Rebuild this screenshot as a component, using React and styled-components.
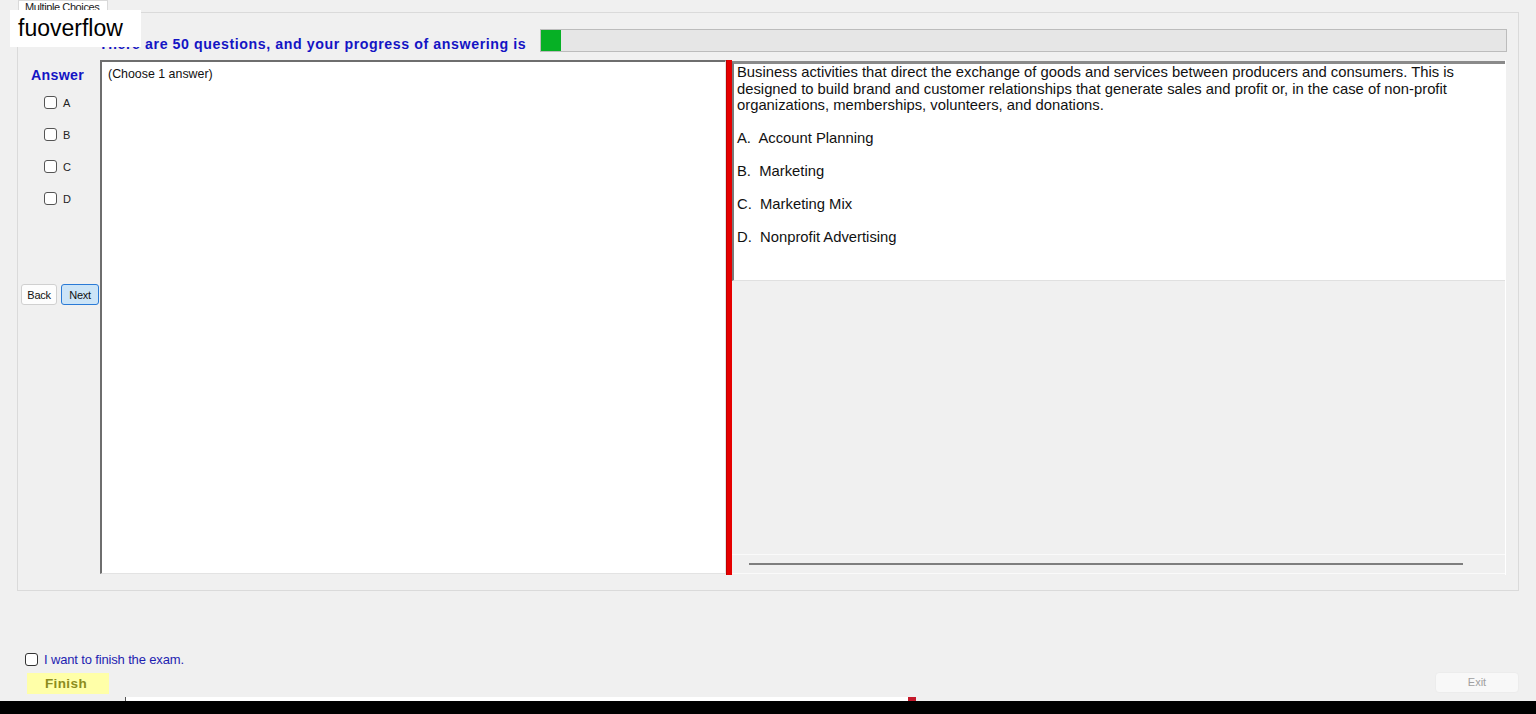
import styled, { createGlobalStyle } from "styled-components";

const GlobalStyle = createGlobalStyle`
  html, body {
    margin: 0;
    padding: 0;
    background: #f0f0f0;
    font-family: "Liberation Sans", Arial, sans-serif;
  }
`;

const Page = styled.div`
  position: relative;
  width: 1536px;
  height: 714px;
  overflow: hidden;
  display: flex;
  flex-direction: column;
  background: #f0f0f0;
`;

const Watermark = styled.div`
  position: absolute;
  left: 10px;
  top: 10px;
  width: 131px;
  height: 37px;
  background: #ffffff;
  color: #000;
  font-size: 23px;
  line-height: 37px;
  padding-left: 8px;
  box-sizing: border-box;
  z-index: 5;
`;

const TabStrip = styled.div`
  height: 12px;
  display: flex;
  padding-left: 18px;
`;

const Tab = styled.div`
  width: 90px;
  height: 13px;
  background: #ffffff;
  border: 1px solid #d9d9d9;
  border-bottom: none;
  box-sizing: border-box;
  font-size: 11px;
  letter-spacing: -0.4px;
  color: #222;
  padding-left: 6px;
  line-height: 13px;
  overflow: hidden;
  white-space: nowrap;
  position: relative;
  z-index: 2;
`;

const TabPanel = styled.div`
  margin: 0 17px;
  height: 579px;
  box-sizing: border-box;
  border: 1px solid #dadada;
  background: #f0f0f0;
  display: flex;
  flex-direction: column;
  padding: 16px 12px 0 0;
`;

const HeaderRow = styled.div`
  display: flex;
  align-items: flex-end;
  height: 23px;
  padding-left: 81px;
  gap: 14px;
`;

const HeaderText = styled.div`
  color: #1414c4;
  font-weight: bold;
  font-size: 14.2px;
  letter-spacing: 0.58px;
  white-space: nowrap;
  line-height: 15px;
`;

const Progress = styled.div`
  flex: 1;
  height: 23px;
  box-sizing: border-box;
  border: 1px solid #bcbcbc;
  background: #e6e6e6;
  margin-right: -1px;
`;

const ProgressFill = styled.div`
  height: 100%;
  background: #06b025;
`;

const Body = styled.div`
  display: flex;
  margin-top: 8px;
  height: 515px;
`;

const AnswerCol = styled.div`
  width: 82px;
  display: flex;
  flex-direction: column;
  padding-left: 3px;
  box-sizing: border-box;
`;

const AnswerTitle = styled.div`
  color: #1414c4;
  font-weight: bold;
  font-size: 14.2px;
  letter-spacing: 0.3px;
  margin: 8px 0 0 10px;
  line-height: 15px;
`;

const Choices = styled.div`
  display: flex;
  flex-direction: column;
  gap: 19px;
  margin: 13px 0 0 23px;
`;

const Choice = styled.label`
  display: flex;
  align-items: center;
  gap: 6px;
  height: 13px;
  font-size: 11px;
  color: #222;
`;

const Box = styled.span`
  width: 13px;
  height: 13px;
  box-sizing: border-box;
  border: 1px solid ${(p) => (p.$dark ? "#333" : "#555")};
  border-radius: 3px;
  background: #ffffff;
  flex-shrink: 0;
`;

const NavRow = styled.div`
  display: flex;
  gap: 4px;
  margin-top: 79px;
`;

const NavButton = styled.button`
  height: 21px;
  width: ${(p) => p.$w}px;
  box-sizing: border-box;
  padding: 0;
  font-family: "Liberation Sans", Arial, sans-serif;
  font-size: 11px;
  letter-spacing: -0.3px;
  color: #111;
  border-radius: 3px;
  border: 1px solid ${(p) => (p.$active ? "#2a7ad6" : "#d0d0d0")};
  background: ${(p) => (p.$active ? "#cce4f7" : "#fdfdfd")};
`;

const QuestionBox = styled.div`
  width: 626px;
  height: 514px;
  box-sizing: border-box;
  background: #ffffff;
  border-top: 2px solid #6e6e6e;
  border-left: 2px solid #6e6e6e;
  border-right: 1px solid #e3e3e3;
  border-bottom: 1px solid #e3e3e3;
  font-size: 12.4px;
  color: #111;
  padding: 5px 6px;
`;

const Splitter = styled.div`
  width: 6px;
  height: 515px;
  background: #e60000;
  border-left: 1px solid #c00000;
  box-sizing: border-box;
`;

const RightPane = styled.div`
  flex: 1;
  height: 515px;
  display: flex;
  flex-direction: column;
  box-sizing: border-box;
  border-right: 1px solid #ffffff;
`;

const ContentBox = styled.div`
  height: 220px;
  box-sizing: border-box;
  background: #ffffff;
  border-top: 3px solid #8a8a8a;
  border-left: 2px solid #7a7a7a;
  border-bottom: 1px solid #e0e0e0;
  padding: 0 0 0 3px;
  margin-top: 1px;
  font-size: 14.8px;
  line-height: 16.5px;
  color: #111;
`;

const Stem = styled.p`
  margin: 0 0 16px;
  white-space: nowrap;
`;

const Option = styled.p`
  margin: 0 0 16.5px;
  white-space: pre;
`;

const LowerArea = styled.div`
  flex: 1;
  display: flex;
  flex-direction: column;
  justify-content: flex-end;
  background: #f0f0f0;
`;

const ScrollTrack = styled.div`
  height: 18px;
  border-top: 1px solid #fafafa;
  border-bottom: 1px solid #fafafa;
  display: flex;
  align-items: center;
  padding-left: 17px;
  margin-bottom: 1px;
`;

const ScrollThumb = styled.div`
  width: 714px;
  height: 2px;
  background: #7e7e7e;
`;

const Footer = styled.div`
  flex: 1;
  display: flex;
  flex-direction: column;
  padding: 62px 17px 0 25px;
  position: relative;
`;

const FinishCheck = styled.label`
  display: flex;
  align-items: center;
  gap: 6px;
  font-size: 13px;
  color: #1e1eb0;
  letter-spacing: -0.15px;
  height: 13px;
`;

const FooterRow = styled.div`
  display: flex;
  justify-content: space-between;
  align-items: flex-start;
  margin-top: 6px;
`;

const FinishButton = styled.div`
  width: 82px;
  height: 21px;
  margin-left: 2px;
  margin-top: 1px;
  background: #ffffa8;
  color: #8c8c1c;
  font-weight: bold;
  font-size: 13.5px;
  letter-spacing: 0.4px;
  text-align: center;
  line-height: 21px;
  padding-right: 4px;
  box-sizing: border-box;
`;

const ExitButton = styled.div`
  width: 84px;
  height: 21px;
  box-sizing: border-box;
  border: 1px solid #ececec;
  border-radius: 4px;
  background: #f8f8f8;
  color: #a0a0a0;
  font-size: 11px;
  text-align: center;
  line-height: 19px;
`;

const Strip = styled.div`
  height: 4px;
  display: flex;
  margin-top: auto;
  padding-left: 125px;
`;

const StripWhite = styled.div`
  width: 782px;
  background: #ffffff;
  border-left: 1px solid #555;
`;

const StripRed = styled.div`
  width: 8px;
  background: #c4182a;
`;

const BlackBar = styled.div`
  height: 13px;
  background: #000;
`;

export default function App() {
  const options = [
    "A.  Account Planning",
    "B.  Marketing",
    "C.  Marketing Mix",
    "D.  Nonprofit Advertising",
  ];
  return (
    <Page>
      <GlobalStyle />
      <Watermark>fuoverflow</Watermark>
      <TabStrip>
        <Tab>Multiple Choices</Tab>
      </TabStrip>
      <TabPanel>
        <HeaderRow>
          <HeaderText>There are 50 questions, and your progress of answering is</HeaderText>
          <Progress>
            <ProgressFill style={{ width: `${(1 / 50) * 100}%` }} />
          </Progress>
        </HeaderRow>
        <Body>
          <AnswerCol>
            <AnswerTitle>Answer</AnswerTitle>
            <Choices>
              {["A", "B", "C", "D"].map((l) => (
                <Choice key={l}>
                  <Box />
                  {l}
                </Choice>
              ))}
            </Choices>
            <NavRow>
              <NavButton $w={36}>Back</NavButton>
              <NavButton $w={38} $active>
                Next
              </NavButton>
            </NavRow>
          </AnswerCol>
          <QuestionBox>(Choose 1 answer)</QuestionBox>
          <Splitter />
          <RightPane>
            <ContentBox>
              <Stem>
                Business activities that direct the exchange of goods and services between producers and consumers. This is
                <br />
                designed to build brand and customer relationships that generate sales and profit or, in the case of non-profit
                <br />
                organizations, memberships, volunteers, and donations.
              </Stem>
              {options.map((o) => (
                <Option key={o}>{o}</Option>
              ))}
            </ContentBox>
            <LowerArea>
              <ScrollTrack>
                <ScrollThumb />
              </ScrollTrack>
            </LowerArea>
          </RightPane>
        </Body>
      </TabPanel>
      <Footer>
        <FinishCheck>
          <Box $dark />
          I want to finish the exam.
        </FinishCheck>
        <FooterRow>
          <FinishButton>Finish</FinishButton>
          <ExitButton>Exit</ExitButton>
        </FooterRow>
      </Footer>
      <Strip>
        <StripWhite />
        <StripRed />
      </Strip>
      <BlackBar />
    </Page>
  );
}
